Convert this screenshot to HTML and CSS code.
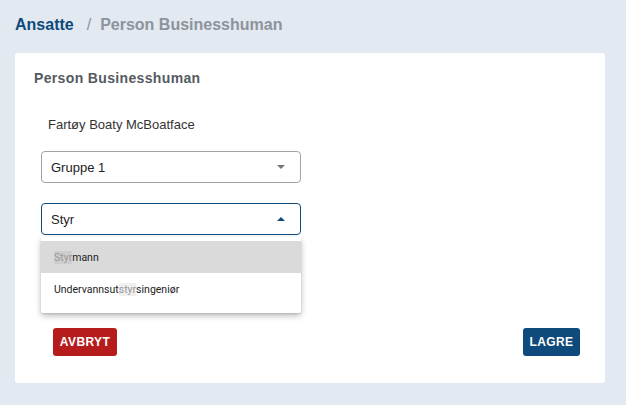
FILE: index.html
```html
<!DOCTYPE html>
<html lang="no">
<head>
<meta charset="utf-8">
<title>Person Businesshuman</title>
<link rel="stylesheet" href="styles.css">
</head>
<body>
<nav class="crumbs">
  <a class="crumb-link" href="#">Ansatte</a>
  <span class="crumb-sep">/</span>
  <span class="crumb-current">Person Businesshuman</span>
</nav>
<main class="card">
  <h1 class="card-title">Person Businesshuman</h1>
  <div class="vessel">Fartøy Boaty McBoatface</div>
  <div class="select">
    <span class="select-value">Gruppe 1</span>
    <span class="arrow arrow-down"></span>
  </div>
  <div class="select-wrap">
    <div class="select select-active">
      <span class="select-value">Styr</span>
      <span class="arrow arrow-up"></span>
    </div>
    <ul class="menu">
      <li class="menu-item menu-item-hover"><mark class="hl">Styr</mark>mann</li>
      <li class="menu-item">Undervannsut<mark class="hl">styr</mark>singeniør</li>
    </ul>
  </div>
  <div class="actions">
    <button class="btn btn-cancel">AVBRYT</button>
    <button class="btn btn-save">LAGRE</button>
  </div>
</main>
</body>
</html>
```
FILE: styles.css
```css
html, body {
  margin: 0;
  padding: 0;
}
body {
  background: #e2e9f1;
  font-family: "Liberation Sans", Arial, sans-serif;
  width: 626px;
  height: 405px;
  overflow: hidden;
}
.crumbs {
  display: flex;
  align-items: center;
  height: 20px;
  padding: 15px 0 0 15px;
  font-size: 16px;
  font-weight: bold;
  line-height: 20px;
}
.crumb-link {
  color: #0e4a7b;
  text-decoration: none;
}
.crumb-sep {
  color: #8d939a;
  margin: 0 9px 0 13px;
  font-weight: normal;
}
.crumb-current {
  color: #8d939a;
}
.card {
  display: flex;
  flex-direction: column;
  margin: 18px 21px 0 15px;
  background: #fff;
  border-radius: 3px;
  padding: 17px 25px 27px 19px;
  height: 286px;
}
.card-title {
  margin: 0;
  font-size: 14px;
  line-height: 16px;
  letter-spacing: 0.35px;
  color: #555a5f;
  font-weight: bold;
}
.vessel {
  margin: 31px 0 0 14px;
  font-size: 13px;
  line-height: 16px;
  color: #333;
}
.select {
  box-sizing: border-box;
  width: 260px;
  height: 32px;
  margin-top: 18px;
  margin-left: 7px;
  border: 1px solid #a2a2a2;
  border-radius: 4px;
  display: flex;
  align-items: center;
  padding: 0 15px 0 9px;
  font-size: 13px;
  color: #222;
}
.select-value {
  flex: 1;
}
.select-wrap {
  position: relative;
  margin-top: 20px;
  margin-left: 7px;
}
.select-wrap .select {
  margin: 0;
}
.select-active {
  border-color: #0e4a7b;
}
.arrow {
  width: 0;
  height: 0;
  border-left: 4px solid transparent;
  border-right: 4px solid transparent;
}
.arrow-down {
  border-top: 4px solid #757575;
}
.arrow-up {
  border-bottom: 4px solid #0e4a7b;
}
.menu {
  position: absolute;
  top: 34px;
  left: 0;
  width: 260px;
  margin: 0;
  padding: 4px 0 8px;
  list-style: none;
  background: #fff;
  box-shadow: 0 3px 6px rgba(0, 0, 0, 0.25), 0 1px 2px rgba(0, 0, 0, 0.12);
  border-radius: 2px;
  z-index: 2;
}
.menu-item {
  height: 32px;
  display: flex;
  align-items: center;
  padding-left: 13px;
  font-family: Roboto, "Liberation Sans", sans-serif;
  font-size: 10.5px;
  color: #222;
}
.menu-item-hover {
  background: #dadada;
}
.hl {
  background: rgba(0, 0, 0, 0.06);
  color: #999;
}
.actions {
  display: flex;
  justify-content: space-between;
  margin-top: 93px;
  padding-left: 19px;
}
.btn {
  border: none;
  border-radius: 3px;
  height: 28px;
  padding: 0;
  font-family: "Liberation Sans", Arial, sans-serif;
  font-weight: bold;
  font-size: 12px;
  letter-spacing: 0.4px;
  color: #fff;
}
.btn-cancel {
  background: #b71c1c;
  width: 64px;
}
.btn-save {
  background: #0e4a7b;
  width: 57px;
}
```
